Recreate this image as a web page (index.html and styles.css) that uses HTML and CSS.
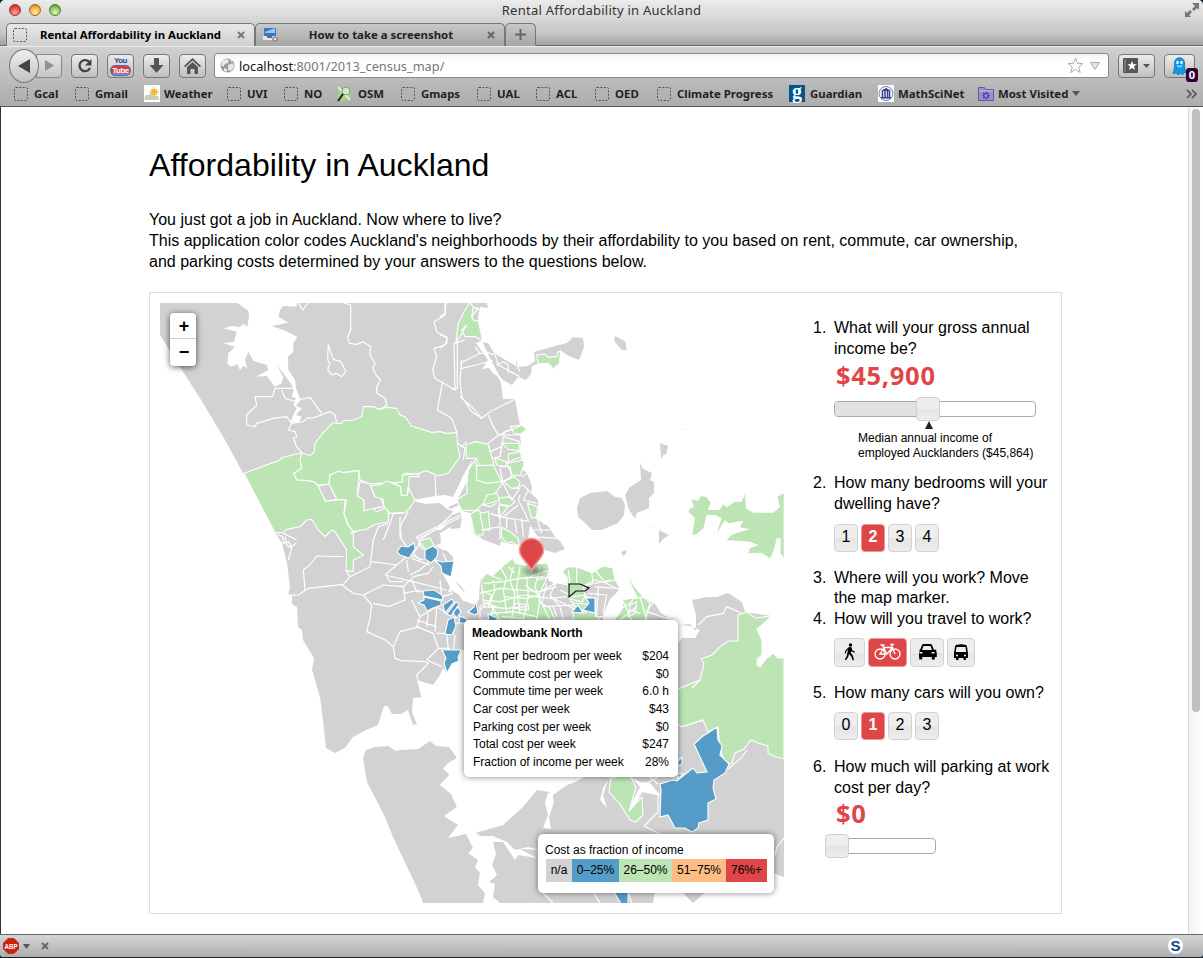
FILE: index.html
```
<!DOCTYPE html>
<html lang="en">
<head>
<meta charset="utf-8">
<title>Rental Affordability in Auckland</title>
<link rel="stylesheet" href="styles.css">
</head>
<body>
<svg width="0" height="0" class="defs">
  <defs>
    <symbol id="blank" viewBox="0 0 14 14"><rect x=".5" y=".5" width="13" height="13" rx="1.5" fill="none" stroke="#555" stroke-dasharray="2 1.4"/></symbol>
    <radialGradient id="shade"><stop offset="0" stop-color="#444" stop-opacity=".6"/><stop offset="1" stop-color="#444" stop-opacity="0"/></radialGradient>
  </defs>
</svg>
<div class="window">
  <header class="titlebar">
    <div class="lights"><i class="light red"></i><i class="light amber"></i><i class="light green"></i></div>
    <span class="title">Rental Affordability in Auckland</span>
    <svg class="full" viewBox="0 0 14 15" width="14" height="15" fill="#777"><path d="M7 0h7v7l-2-2-3 3-2-2 3-3zM0 8l2 2 3-3 2 2-3 3 2 2H0z"/></svg>
  </header>
  <div class="tabs">
    <div class="tab active"><svg class="ic" width="14" height="14"><use href="#blank"/></svg><span class="tabtext">Rental Affordability in Auckland</span><svg width="8" height="8" viewBox="0 0 8 8"><path d="M1 1l6 6M7 1l-6 6" stroke="#777" stroke-width="2"/></svg></div>
    <div class="tab back"><svg width="15" height="15" viewBox="0 0 15 15"><path fill="#3977c8" d="M1 1h12v8H1z"/><path fill="#9fc5ee" d="M2 5l10-4v5H2z"/><path fill="#e8e8e8" d="M0 9h14v4H0z"/><path fill="#667" d="M4 9h5v2H4z"/><circle cx="12" cy="12" r="2.800" fill="#889"/><circle cx="12" cy="12" r="1.200" fill="#eee"/></svg><span class="tabtext">How to take a screenshot</span><svg width="8" height="8" viewBox="0 0 8 8"><path d="M1 1l6 6M7 1l-6 6" stroke="#666" stroke-width="2"/></svg></div>
    <div class="tab new"><svg width="11" height="11" viewBox="0 0 11 11"><path d="M5.500 0v11M0 5.500h11" stroke="#666" stroke-width="2"/></svg></div>
  </div>
  <nav class="navbar">
    <div class="history">
      <div class="backbtn"><svg width="14" height="16" viewBox="0 0 14 16"><path d="M13 1v14L1 8z" fill="#444"/></svg></div>
      <div class="fwd"><svg width="9" height="11" viewBox="0 0 9 11"><path d="M0 0v11l9-5.500z" fill="#909090"/></svg></div>
    </div>
    <div class="btn"><svg width="16" height="16" viewBox="0 0 16 16"><path d="M12.500 4.500A5.500 5.500 0 1 0 13 10" fill="none" stroke="#444" stroke-width="2.300"/><path d="M14.500 1v6.500H8z" fill="#444"/></svg></div>
    <div class="btn yt"><span class="you">You</span><span class="tube">Tube</span></div>
    <div class="btn"><svg width="15" height="17" viewBox="0 0 15 17"><path d="M5 1h5v7h4.500l-7 8-7-8H5z" fill="#555"/></svg></div>
    <div class="btn"><svg width="17" height="16" viewBox="0 0 17 16"><path d="M8.500 0L17 8l-1.200 1.200L8.500 2.500 1.200 9.200 0 8zM3 9l5.500-5L14 9v7h-3.500v-5h-4v5H3z" fill="#555"/></svg></div>
    <div class="url">
      <svg width="15" height="15" viewBox="0 0 15 15"><circle cx="7.500" cy="7.500" r="7" fill="#999"/><path fill="#e8e8e8" d="M2 3l4-2 3 1-1 3-3 1-2 3-2-2zM8 7l5-2 1 4-3 4-3-1zM10 1l3 2-2 1zM4 10l3 1v3l-3-1z"/></svg>
      <span class="address"><b class="host">localhost</b>:8001/2013_census_map/</span>
      <svg class="star" width="17" height="17" viewBox="0 0 17 17"><path d="M8.500 1l2 5.300 5.500.2-4.300 3.500 1.500 5.500-4.700-3.200-4.700 3.200L5.300 10 1 6.500l5.500-.2z" fill="#fff" stroke="#aaa"/></svg>
      <svg width="10" height="8" viewBox="0 0 10 8"><path d="M.5.500h9L5 7.500z" fill="#e4e4e4" stroke="#aaa"/></svg>
    </div>
    <div class="btn bookmarkbtn"><svg width="15" height="15" viewBox="0 0 15 15"><rect width="15" height="15" rx="1" fill="#555"/><path d="M2 1v13" stroke="#999"/><path d="M9 3l1.300 3.200 3.400.1L11 8.400l1 3.600-3-2-3 2 1-3.600-2.700-2.100 3.400-.1z" fill="#fff"/></svg><svg width="7" height="4" viewBox="0 0 7 4"><path d="M0 0h7L3.500 4z" fill="#555"/></svg></div>
    <div class="btn ghost"><svg width="15" height="18" viewBox="0 0 15 18"><path d="M2.500 6C2.500-1 12.500-1 12.500 6c0 5 .5 8 2 10l-2.500-.5-1 2-2.500-1.200L6 18l-1.500-2L1 16.500C2.500 13 2.500 10 2.500 6z" fill="#1597e8" stroke="#1270b5" stroke-width=".8"/><path d="M5.500 4v3M9.500 4v3" stroke="#fff" stroke-width="2"/><path d="M5 8.500q2.500 3 5 0" stroke="#fff" fill="none"/></svg><span class="count">0</span></div>
  </nav>
  <div class="bookmarks">
    <span class="bm"><svg width="14" height="14"><use href="#blank"/></svg>Gcal</span>
    <span class="bm"><svg width="14" height="14"><use href="#blank"/></svg>Gmail</span>
    <span class="bm w"><svg width="16" height="17" viewBox="0 0 16 17"><path fill="#fff" d="M0 0h16v17H0z"/><circle cx="10" cy="7" r="3" fill="#f9b52a"/><path d="M10 2v8M5 7h10M7 4l6 6M13 4l-6 6" stroke="#f9b52a"/><path d="M1 15c-2-4 2-6 4-5 1-3 6-2 6 1 4-1 5 3 3 4z" fill="#c9cdb8"/></svg>Weather</span>
    <span class="bm"><svg width="14" height="14"><use href="#blank"/></svg>UVI</span>
    <span class="bm"><svg width="14" height="14"><use href="#blank"/></svg>NO</span>
    <span class="bm"><svg width="15" height="16" viewBox="0 0 15 16"><path d="M1 1l5 1 4-1 4 2-1 12-4-1-4 1-4-1z" fill="#a5d28c"/><path d="M1 1l12 13M10 10l3-7" stroke="#f2f7df" stroke-width="1.500"/><circle cx="9" cy="5" r="4" fill="#d8eed8" fill-opacity=".8" stroke="#7b9a7b"/><path d="M6 8l-5 7" stroke="#222" stroke-width="2"/></svg>OSM</span>
    <span class="bm"><svg width="14" height="14"><use href="#blank"/></svg>Gmaps</span>
    <span class="bm"><svg width="14" height="14"><use href="#blank"/></svg>UAL</span>
    <span class="bm"><svg width="14" height="14"><use href="#blank"/></svg>ACL</span>
    <span class="bm"><svg width="14" height="14"><use href="#blank"/></svg>OED</span>
    <span class="bm"><svg width="14" height="14"><use href="#blank"/></svg>Climate Progress</span>
    <span class="bm"><i class="guardian">g</i>Guardian</span>
    <span class="bm w"><svg width="16" height="17" viewBox="0 0 16 17"><path fill="#fff" d="M0 0h16v17H0z"/><circle cx="8" cy="8.500" r="7" fill="#eef" stroke="#7781b5"/><path d="M3 6l5-3 5 3zM3 12h10v1.500H3z" fill="#34427e"/><path d="M4.500 6v6M7 6v6M9.500 6v6M11.500 6v6" stroke="#34427e" stroke-width="1.400"/></svg>MathSciNet</span>
    <span class="bm w"><svg width="16" height="15" viewBox="0 0 16 15"><path d="M.5 1.500h6l1.500 2h7.500v11H.5z" fill="#9a8fd0" stroke="#665a9c"/><path d="M1 5h14" stroke="#c5bdec"/><circle cx="8" cy="9.500" r="2.300" fill="none" stroke="#5c4ca0" stroke-width="1.500"/><path d="M8 5.500v2M8 11.500v2M4 9.500h2M10 9.500h2M5.200 6.700l1.300 1.300M9.500 11l1.300 1.300M10.800 6.700L9.500 8M6.500 11l-1.300 1.300" stroke="#5c4ca0" stroke-width="1.200"/></svg>Most Visited<svg class="drop" width="8" height="5" viewBox="0 0 8 5"><path d="M0 0h8L4 5z" fill="#555"/></svg></span>
    <svg width="11" height="10" viewBox="0 0 11 10"><path d="M1 1l4 4-4 4M6 1l4 4-4 4" fill="none" stroke="#555" stroke-width="1.700"/></svg>
  </div>

  <div class="viewport">
    <main class="page">
      <h1 class="heading">Affordability in Auckland</h1>
      <p class="intro">You just got a job in Auckland. Now where to live?<br>This application color codes Auckland's neighborhoods by their affordability to you based on rent, commute, car ownership,<br>and parking costs determined by your answers to the questions below.</p>
      <section class="panel">
        <div class="map">
          <svg class="regions" viewBox="160 303 624 600" width="624" height="600">
            <!-- land masses -->
            <g fill="#d2d2d2">
              <path d="M160 303H487L488 308 480 307 478 318 483 341 474 343 480 342 488 343 494 353 507 361 516 366 516 360 518 367 528 366 535 361 534 352 555 346 567 343 573 337 583 338 584 347 579 360 567 355 560 350 558 362 553 369 547 363 537 364 532 366 531 374 526 380 518 377 512 385 503 380 494 370 501 383 503 399 515 399 517 410 520 425 527 429 520 435 521 443 519 452 523 463 523 470 527 473 532 487 531 493 538 500 538 512 535 518 548 526 556 538 560 541 565 549 555 553 545 550 538 537 530 525 528 540 520 545 505 543 501 541 500 546 481 545 481 537 474 535 469 514 462 511 457 500 468 480 472 460 464 474 453 497 445 495 435 496 413 500 420 503 440 503 447 509 461 514 461 529 450 527 440 533 441 543 435 546 443 550 453 551 453 563 450 577 443 574 450 587 448 592 458 594 467 607 477 602 478 615 490 620V650L462 650 458 660 455 658 447 673 443 668 440 675 433 685 423 682 418 680 422 697 413 698 412 713 417 724 413 725 408 710 401 714 392 714 388 706 384 706 378 725 366 730 353 737 345 748 335 753 326 748 323 720 320 697 312 670 314 658 303 640 302 630 298 627 297 607 292 604 292 595H288L290 587 287 563 282 543 275 533 262 507 243 473 225 440 203 403 180 367 160 335z"/>
              <path d="M615 336L625 341 627 350H622L614 341zM660 443L668 446 666 455 664 454 661 459zM640 463L643 469 652 473 650 480 654 482V493L649 498 649 508 637 513 635 519 629 510 625 495 630 487 641 480zM577 508L580 498 590 493 607 491 615 497 622 498 625 505 624 515 618 523 602 530 592 530 583 521 578 517zM659 530L669 535 662 540 659 544zM621 552L627 550 626 554 623 556zM682 429h1v1h-1zM653 527h1v1h-1z"/>
              <path d="M480 580L487 573 492 576 504 565 513 558 515 563 523 565 547 563 550 570 548 580 559 587 567 583 567 577 562 572 567 567 577 567 592 573 603 566 613 568 615 580 620 590 612 597 603 613V627H478L475 612 478 600z"/>
              <path d="M629 568L632 583 643 597 655 604 661 613 667 617 670 630H613L614 620 622 609 623 600 637 597 630 583z"/>
              <path d="M692 600L707 597 717 597 728 593 742 602 745 612 772 616 758 628 757 637 762 655 758 660 757 665 760 667 765 660 773 653 778 658 784 658V877L773 873 762 864H745L708 890 693 903 680 890 655 890 653 903H423L418 890 393 837 385 817 367 782 363 758 366 750 375 747 388 746 396 751 400 750 418 749 430 741 436 746 449 747 457 758 455 766 443 768 450 775 440 785 452 793 457 807 445 817 458 824 475 833 503 825 523 807 537 790 550 792 551 804 553 795 567 785 573 783 583 778 600 740 660 700 678 643 682 638 695 638 700 630 690 626 680 625 690 624 696 631V615z"/>
            </g>
            <!-- harbours and estuaries -->
            <g fill="#fff">
              <path transform="translate(160 300) scale(.33333)" d="M230 8L265 32 267 52 262 80 250 72 240 82 215 78 190 85 230 95 222 125 190 130 225 140 205 160 202 192 215 200 232 193 240 210 250 198 262 205 255 180 265 155 280 182 320 195 325 210 288 230 320 228 345 260 365 250 370 232 350 195 370 220 392 250 402 268 395 290 408 295 400 315 410 325 400 345 392 365 415 370 425 350 408 345 425 325 408 318 422 300 416 285 408 265 405 240 385 210 384 170 400 155 400 130 412 110 370 90 335 78 385 68 355 50 360 30 370 18 410 20 410 8z"/>
              <path d="M457 758L448 763 443 769 450 774 440 785 451 794 457 807 444 816 458 825 448 838 466 834 473 848 468 853 478 860 475 867 480 873 478 885 485 893 483 903H500L493 897 495 884 489 882 497 875 492 865 496 854 493 842 503 842 515 860 518 855 537 858 520 849 540 850 528 847 515 850 507 842 493 836 480 836 475 832 503 825 515 780zM548 793L545 803 548 815 543 828 551 829 549 817 554 802 552 792zM608 780L603 788 600 800 607 808 603 795zM631 777L640 787 634 798 628 811 637 803 642 792 661 796 650 783 640 782z"/>
              <path d="M476 343L482 341 489 356 500 377 494 374 489 368 482 369 488 360zM413 500L434 498 455 500 464 506 456 509 470 513 474 536 500 546 520 545 530 553 494 567 480 578 479 600 471 600 463 587 453 583 454 558 441 545 441 535 452 528 452 520 441 530 435 530 454 511 440 503 425 504z"/>
            </g>
            <g fill="#d2d2d2"><path d="M448 507l9-4 4 1-10 5zM440 527l12-12 8-3 2 6-2 10-8 1-5-5zM454 581l12 13-4-7zM451 590l8 5 6 10-4 4-8-8zM461 600l12 4-4 9-6-3z"/></g>

            <!-- regions costing 26 to 50 percent of income -->
            <g class="edge" fill="#bce4b5" transform="translate(160 300) scale(.33333)">
              <path d="M425 458L450 467 463 455 465 430 490 397 520 367 530 370 545 370 550 362 580 360 605 350 610 320 642 320 655 328 680 322 710 325 720 345 735 350 755 378 815 397 840 395 860 400 890 398 893 435 900 470 865 520 835 527 798 512 770 522 735 520 725 548 660 550 630 552 600 540 597 512 550 518 535 514 510 525 507 552 475 556 462 545 440 542 410 540 402 520 425 505 420 480z"/>
              <path d="M252 520L360 480 365 473 425 458 420 480 425 505 402 520 410 540 440 542 462 545 475 558 497 603 555 598 552 640 562 672 580 695 580 740 610 765 580 780 580 815 558 812 560 750 525 695 515 690 495 710 475 690 455 658 440 660 420 680 380 688 370 697 345 698 308 628z"/>
              <path d="M510 525L535 514 550 518 597 512 592 585 612 600 612 632 640 625 650 635 675 625 685 630 685 665 640 675 620 688 580 695 565 675 552 640 560 600 530 598 507 552z"/>
              <path d="M475 558L507 552 530 598 497 604z" fill="#d2d2d2"/><path d="M600 545L630 552 645 590 660 592 673 620 640 625 612 632 612 600 592 588z" fill="#d2d2d2"/>
              <path d="M632 558L665 553 680 543 722 560 724 587 742 585 746 565 765 600 748 625 735 638 690 640 672 620 670 598 645 590z"/><path d="M727 525L775 521 778 530 748 530 742 585 724 587 722 560 700 548 727 546z"/>
              <path d="M888 123L895 70 915 30 930 8 940 22 955 25 935 50 940 60 955 63 968 123 945 110 915 110 905 90 920 75 900 110z"/>
              <path d="M1130 165L1155 162 1165 172 1190 170 1195 155 1202 155 1198 190 1180 207 1165 190 1135 192z"/>
            </g>
            <g class="edge" fill="#bce4b5" transform="translate(440 300) scale(.33333)">
              <path d="M77 435L105 425 145 433 162 495 120 505 110 475 80 475z"/><path d="M80 555L85 510 105 480 115 535 175 540 188 548 170 575 130 610 105 632 65 630 50 600 82 580z"/><path d="M110 497L160 495 185 545 140 550 110 540z"/><path d="M90 642L118 630 132 665 128 705 105 705z"/><path d="M120 640L145 635 150 690 130 690z"/><path d="M140 585L170 580 180 600 130 615z"/><path d="M175 595L210 590 225 605 210 618 180 612z"/><path d="M177 615L205 620 180 650z"/><path d="M190 545L222 530 240 545 235 565 215 565z"/><path d="M185 430L240 430 235 452 205 448z"/><path d="M205 462L240 455 245 470 205 485z"/><path d="M200 490L250 480 252 495 240 527 217 525z"/><path d="M165 475L200 485 195 500 170 495z"/><path d="M210 380L245 375 260 388 240 403 222 400z"/><path d="M262 610L292 620 290 650 275 655z"/><path d="M185 682L210 695 235 715 238 740 215 725 200 730 184 710z"/>
            </g>
            <path fill="#bce4b5" transform="translate(440 480) scale(.33333)" d="M745 95L752 85 762 80 753 58 775 62 782 48 800 52 812 68 803 90 838 90 850 73 860 82 885 65 905 65 915 42 918 85 940 98 1000 98 1020 80 1012 50 1031 40V232L1022 220 1022 175 1010 175 1002 210 990 235 965 218 925 220 930 205 955 195 930 185 860 180 875 165 900 155 930 148 900 142 910 122 865 130 855 120 830 160 840 130 845 115 825 105 800 105 790 145 770 162 757 165 765 115z"/>
            <path class="edge" fill="#bce4b5" d="M481 580L487 573 492 576 504 565 513 558 515 563 523 565 547 563 550 570 545 582 538 597 565 602 594 605 603 614 596 622H480L484 604z"/>
            <path class="edge" fill="#bce4b5" d="M562 572L567 567 577 567 592 573 603 566 613 568 615 580 600 583 590 588 582 602 568 598 567 577z"/>
            <path class="edge" fill="#bce4b5" d="M629 568L632 583 643 597 650 602 645 622H613L622 609 623 600 637 597 630 583zM419 541L430 538 434 546 426 550z"/>
            <path class="edge" fill="#d2d2d2" transform="translate(440 480) scale(.33333)" d="M300 335L350 308 385 315 387 355 400 370 400 420 345 420 330 385 298 365zM430 318L465 300 490 305 540 330 510 360 490 410 467 410 467 355 435 350zM570 375L590 365 585 400 565 410zM120 380L140 365 160 380 150 420H120zM225 370L265 375 265 390 220 385z"/>
            <path class="edge" fill="#bce4b5" d="M738 615L747 612 755 618 772 616 761 626 757 629 762 640 762 655 757 659 757 665 760 667 765 660 773 653 778 658 784 658V759L773 756 768 753V746L758 743 751 740 744 749 735 753 732 763 725 764 720 748 718 727 708 732 703 720 682 727 670 720 678 689 700 680 704 664 701 659 712 655 722 645 729 641 738 641z"/>
            <path class="edge" fill="#bce4b5" d="M611 778L629 774 636 787 629 811 642 797 643 815 636 822 630 820 620 804 609 792z"/>

            <!-- internal boundaries -->
            <g class="lines" transform="translate(160 300) scale(.33333)">
              <path d="M415 8L428 30 445 8M550 8L572 15 572 90 563 110 568 130 590 133 610 125 632 140 630 165 645 190 638 205 648 225 662 240 650 260 650 280 675 295 680 315 660 330M505 135L503 180 510 190 503 210 515 225 530 220 545 230 558 215 543 185 520 178zM858 8L855 45 822 65 830 95 862 115 855 135 822 145 830 170 818 210 825 235 885 270 882 130 915 120M892 115L892 265 875 268M848 245L832 330 875 355 892 400M405 265H345L338 290 285 290 290 315 260 345 260 375 285 380 290 370 340 355 380 350 395 370 430 365 440 355 465 352 510 335 525 345 530 368M365 270L375 295 400 303 450 292 485 340M395 370L385 390 405 395 410 410 400 415 410 440 425 458M905 180L900 240 905 290 935 335 965 355M905 205L950 195 1000 180M825 527L828 590M895 430L905 440 920 425M745 635L720 680 725 720M925 640L835 685 775 715M370 700L410 720M730 640L700 640 690 670 670 720M590 695L570 700"/>
            </g>
            <g class="lines" transform="translate(220 440) scale(.33333)">
              <path d="M170 282L188 290 190 310 205 305 215 320 228 310M195 290L200 315 215 325 205 360M255 450L250 390 270 375 290 348 370 350M380 395L390 410 370 433 265 445 235 465 205 465M390 410L450 380 460 300 475 260 505 250M455 365L530 375 560 350M365 435L400 460 430 465 455 495 450 535 440 575 495 600 520 620 525 655 545 662 615 665 625 670 590 705 605 770M430 465L490 435 550 440 555 480 505 500 460 490M520 620L540 575 600 560M600 360L580 340 600 310 590 290 720 225M540 230L540 290 560 320M495 405L600 430 680 450M495 405L530 375M570 405L600 390 650 345M550 440L580 410 625 400 640 380M575 480L600 530 590 560 640 580 655 625 620 660M600 530L650 500 680 520M625 520L620 560M650 500L645 575M600 300L650 265M655 625L690 625M650 580L700 580 690 560 735 540M680 580L685 630M620 660L665 680M705 585L700 630M590 540L650 560M575 420L590 455 620 455M550 460L600 450M660 420L665 470 700 460M500 410L510 425 550 425M570 345L610 360M575 355L630 375M560 360L565 395M595 310L610 330M670 340L680 365"/>
            </g>
            <g class="lines" transform="translate(440 300) scale(.33333)">
              <path d="M60 190L100 170 120 160 105 140M120 160L145 160M135 155L165 165 175 195 240 230M170 195L190 185 205 195 205 220M230 195L240 215M100 20L95 55M105 25L118 30M60 290L95 320 125 355 150 335 190 315 225 298M145 345L160 380 175 405 145 430M175 405L240 378M175 405L245 405M190 405L195 395 225 385M190 410L240 425M190 410L180 470 160 475M145 433L150 455 185 440M180 500L210 500 215 530 188 545 180 505M245 530L270 515M240 565L215 600 188 548M220 565L250 555 275 580M240 585L235 600 265 660M265 570L250 600 290 610M175 620L175 650 240 660 270 665M150 640L180 650 180 720M130 615L150 620 170 610M125 690L180 680M190 650L235 615M200 650L200 685M225 660L230 700M245 655L250 710M280 690L330 690M290 650L305 700M270 710L350 715M310 675L320 665M60 435L75 445 70 480M0 50L15 40 15 8M0 105L20 110 20 130 0 145"/>
            </g>
            <g class="lines" transform="translate(440 480) scale(.33333)">
              <path d="M120 340L180 325 240 330 300 335 350 320M125 360L180 365 250 345 330 355 380 350M130 310L190 305 240 295 310 290M150 400L220 395 290 410M190 350L260 355 300 345M130 380L200 385 260 380M160 300L165 330 150 370 180 420M200 290L190 330 200 400M220 260L210 300 225 345 215 420M240 260L230 320 240 400M260 290L265 350 250 420M300 260L285 320 300 360 290 420M320 310L305 370 330 420M350 305L330 345 360 380 370 420M150 285L185 300M180 260L200 295M205 260L225 280M270 290L330 270M290 300L330 290M330 350L390 380 420 400M310 380L400 375 440 400M360 330L400 350 440 345M410 260L410 310M385 270L390 310M455 280L460 310 430 320M490 300L465 270M465 310L510 300M465 320L525 325M445 340L500 345M475 320L470 410M500 345L490 400M120 390L140 370 170 380M185 410L250 415M130 335L155 345 145 380M255 315L290 340M340 380L350 410M520 400L570 370 590 345M550 365L575 420M590 380L540 420M600 350L620 420M640 365L620 395 680 415M570 390L600 400M580 355L640 350M775 435L800 410 850 400 860 380 895 395 905 400"/>
            </g>
            <g class="lines">
              <path d="M692 688L700 680M640 787L658 777M644 826L658 812 658 795M644 826L662 835M728 769L741 758 747 750M784 838L777 847 775 855M543 893L553 903M592 890L600 903M627 890L632 903M680 727L690 724 703 720M650 777L658 784"/>
            </g>

            <!-- regions costing up to 25 percent of income -->
            <g class="edge" fill="#569cc9">
              <path d="M397 552L401 546 408 547 414 543 415 549 409 558 400 555zM425 550L433 546 438 550 437 557 431 563 425 559zM434 560L442 562 454 561 451 577 442 573 441 566zM423 591L434 590 442 595 443 600 424 596zM424 597L441 601 441 605 433 608 427 611 424 605 418 603 424 600zM443 605L452 599 454 602 445 613zM447 614L456 602 459 604 451 616zM453 612L458 607 461 612 456 618zM460 616L467 619V623H459zM445 634L448 620 454 617 456 626 452 635zM468 612L474 607 476 602 478 613 475 615zM442 650L461 650 458 657 459 661 452 664 447 673 444 663 446 658zM572 612L578 605 583 613zM586 598L595 598 595 613 583 610 589 603zM488 614L497 618 497 624H489z"/>
              <path d="M694 744L703 736 708 733 717 727 718 740 722 746 720 755 729 764 725 773 714 780 713 788 716 799 708 803 708 820 699 823 698 828 692 832 685 828 675 828 668 815 660 817 661 790 660 784 673 780 677 781 683 776 693 768 697 773 707 772z"/><path d="M678 761L682 757V764L678 766zM678 774L683 774 678 779z"/><path d="M613 890H628V904H621z"/>
            </g>
            <path d="M569 584h11l9 4-4 3-9 0-7 6z" fill="none" stroke="#111" stroke-width="1.200"/>
            <ellipse cx="534" cy="571" rx="14" ry="7" fill="url(#shade)"/>
            <path d="M531.500 571C528 562 519.500 558 519.500 550.500a12 12 0 0 1 24 0C543.500 558 535 562 531.500 571z" fill="#df4648" stroke="#eb9aa0" stroke-width="1.600"/>
          </svg>
          <div class="zoom"><span class="zin">+</span><span class="zout">−</span></div>
          <div class="popup">
            <strong class="place">Meadowbank North</strong>
            <div class="row"><span>Rent per bedroom per week</span><span>$204</span></div>
            <div class="row"><span>Commute cost per week</span><span>$0</span></div>
            <div class="row"><span>Commute time per week</span><span>6.0 h</span></div>
            <div class="row"><span>Car cost per week</span><span>$43</span></div>
            <div class="row"><span>Parking cost per week</span><span>$0</span></div>
            <div class="row"><span>Total cost per week</span><span>$247</span></div>
            <div class="row"><span>Fraction of income per week</span><span>28%</span></div>
          </div>
          <div class="legend">
            <div>Cost as fraction of income</div>
            <div class="scale"><span class="na">n/a</span><span class="c1">0–25%</span><span class="c2">26–50%</span><span class="c3">51–75%</span><span class="c4">76%+</span></div>
          </div>
        </div>
        <div class="questions">
          <div class="q q1"><span class="num">1.</span><div>What will your gross annual<br>income be?
            <div class="value">$45,900</div>
            <div class="slider income"><div class="fill"></div><div class="handle"></div></div>
            <svg class="tri" width="8" height="8" viewBox="0 0 8 8"><path d="M4 0l4 8H0z" fill="#222"/></svg>
            <div class="median">Median annual income of<br>employed Aucklanders ($45,864)</div></div></div>
          <div class="q q2"><span class="num">2.</span><div>How many bedrooms will your<br>dwelling have?
            <div class="choices"><span class="ch">1</span><span class="ch on">2</span><span class="ch">3</span><span class="ch">4</span></div></div></div>
          <div class="q q3"><span class="num">3.</span><div>Where will you work? Move<br>the map marker.</div></div>
          <div class="q q4"><span class="num">4.</span><div>How will you travel to work?
            <div class="choices travel">
              <span class="ch walk"><svg width="12" height="18" viewBox="0 0 12 18"><circle cx="6.500" cy="2" r="1.700"/><path d="M5 4l2.500.3.800 3 2.700 1.500-.6 1L7.200 8.200 7 10l2 3 1 4-1.400.4-1.300-3.800L5 11l-.8 3L2 17.300l-1.200-.8L2.800 13 4 6.500 2.500 8l-.7 2.500-1.100-.3.800-3z"/></svg></span>
              <span class="ch bike on"><svg width="27" height="17" viewBox="0 0 27 17" fill="none" stroke="#fff" stroke-width="1.300"><circle cx="6" cy="11" r="5"/><circle cx="21" cy="11" r="5"/><path d="M6 11l4-6.500h8.500L13 11zM13 11L8.500 2.500M6.500 2h4M21 11L17 1.500h3"/></svg></span>
              <span class="ch car"><svg width="20" height="16" viewBox="0 0 20 16"><path d="M3 6l2-5q.5-1 1.500-1h7q1 0 1.500 1l2 5 2-.5q1 .8 0 1.500.8.800.8 2V13h-2v2.500h-3V13H5.200v2.500h-3V13H2V9q0-1.200.8-2-1-.7 0-1.500zM5 6h10l-1.500-4h-7z" fill-rule="evenodd"/><path d="M2.500 8.800h3M14.500 8.800h3" stroke="#eee" stroke-width="1.500"/></svg></span>
              <span class="ch bus"><svg width="14" height="16" viewBox="0 0 14 16"><path d="M2 1q5-1.500 10 0 1 .5 1.200 3l.8 5v5h-2v2h-2.500v-2h-5v2H2v-2H0V9l.8-5Q1 1.500 2 1zM2.500 3L1.800 8h10.400l-.7-5z" fill-rule="evenodd"/><path d="M2 11.500h2M10 11.500h2" stroke="#eee" stroke-width="1.500"/></svg></span>
            </div></div></div>
          <div class="q q5"><span class="num">5.</span><div>How many cars will you own?
            <div class="choices cars"><span class="ch">0</span><span class="ch on">1</span><span class="ch">2</span><span class="ch">3</span></div></div></div>
          <div class="q q6"><span class="num">6.</span><div>How much will parking at work<br>cost per day?
            <div class="value">$0</div>
            <div class="slider parking"><div class="handle"></div></div></div></div>
        </div>
      </section>
    </main>
    <div class="scrollbar"><div class="thumb"></div></div>
  </div>
  <footer class="status">
    <svg width="16" height="16" viewBox="0 0 16 16"><path d="M5 .5h6L15.500 5v6L11 15.500H5L.5 11V5z" fill="#d3200c" stroke="#a33"/><text x="8" y="10.500" text-anchor="middle" textLength="13" lengthAdjust="spacingAndGlyphs" class="abp">ABP</text></svg>
    <svg width="7" height="5" viewBox="0 0 7 5"><path d="M0 0h7L3.500 5z" fill="#555"/></svg>
    <svg class="closebar" width="8" height="8" viewBox="0 0 8 8"><path d="M1 1l6 6M7 1l-6 6" stroke="#666" stroke-width="1.800"/></svg>
    <span class="sbadge">S</span>
  </footer>
</div>
</body>
</html>
```
FILE: styles.css
```
* { box-sizing: border-box; }
body { margin: 0; background: #14202c; font-family: "Liberation Sans", Helvetica, sans-serif; color: #000; }
.defs { position: absolute; }
svg { display: block; flex: none; }
.window { width: 1203px; height: 958px; display: flex; flex-direction: column; overflow: hidden; border-radius: 5px 5px 4px 4px; background: #b4b4b4; border-bottom: 1px solid #14202c; }

.titlebar { height: 22px; display: grid; grid-template-columns: 100px 1fr 100px; align-items: center; background: linear-gradient(#ececec, #d3d3d3); font: 13px/20px "Noto Sans", sans-serif; color: #333; }
.lights { display: flex; gap: 8px; padding-left: 9px; margin-top: -1px; }
.light { width: 12px; height: 12px; border-radius: 50%; border: 1px solid #555; }
.red { background: radial-gradient(circle at 50% 75%, #ffaaa2, #e8423e 60%, #a3201c); border-color: #963a36; }
.amber { background: radial-gradient(circle at 50% 75%, #fff0a0, #f5ae3c 60%, #b5701c); border-color: #9a6a2c; }
.green { background: radial-gradient(circle at 50% 75%, #dcffb4, #7fc256 60%, #3f7a28); border-color: #4f7a3e; }
.title { text-align: center; letter-spacing: .25px; margin-top: -2px; }
.full { justify-self: end; margin-right: 4px; }

.tabs { height: 24px; display: flex; padding-left: 6px; background: linear-gradient(#d2d2d2, #c6c6c6 50%, #a2a2a2); border-bottom: 1px solid #666; color: #222; }
.tab { height: 23px; display: flex; align-items: center; border: 1px solid #777; border-bottom: 0; border-radius: 5px 5px 0 0; margin-top: 1px; background: linear-gradient(#c8c8c8, #a6a6a6); }
.tabtext { flex: 1; text-align: center; white-space: nowrap; font: bold 11.400px/22px "Noto Sans", sans-serif; }
.active { width: 249px; height: 24px; padding: 0 9px 0 6px; background: linear-gradient(#e8e8e8, #cfcfcf); color: #000; }
.active .tabtext { padding-right: 3px; }
.back { width: 250px; padding: 0 9px 0 7px; }
.back .tabtext { padding-right: 3px; }
.new { width: 31px; justify-content: center; }

.navbar { height: 38px; display: flex; align-items: center; padding: 1px 8px 0 9px; gap: 9px; border-top: 1px solid #eee; background: linear-gradient(#d0d0d0, #bababa); }
.history { display: flex; align-items: center; width: 53px; }
.backbtn { width: 30px; height: 34px; border: 1px solid #777; border-radius: 50%; background: linear-gradient(#f0f0f0, #c0c0c0); display: flex; align-items: center; justify-content: center; z-index: 1; }
.fwd { width: 26px; height: 24px; margin-left: -3px; display: flex; align-items: center; justify-content: center; border: 1px solid #888; border-radius: 0 4px 4px 0; background: linear-gradient(#e6e6e6, #c6c6c6); }
.btn { width: 27px; height: 24px; display: flex; align-items: center; justify-content: center; border: 1px solid #777; border-radius: 4px; background: linear-gradient(#ececec, #bfbfbf); flex: none; position: relative; }
.yt { flex-direction: column; font: bold 8px/9px "Liberation Sans", sans-serif; letter-spacing: -.5px; }
.you { color: #225088; }
.tube { color: #fff; background: linear-gradient(#d43c46 60%, #7c9cd0); border: 1px solid #4672b4; border-radius: 5px; padding: 0 1px; }
.url { flex: 1; height: 25px; margin-left: -1px; display: flex; align-items: center; gap: 4px; padding: 0 8px 0 5px; background: linear-gradient(#f4f4f4, #fff 8px); border: 1px solid #8a8a8a; border-radius: 3px; font: 12.800px/22px "Noto Sans", sans-serif; color: #777; }
.address { flex: 1; }
.host { font-weight: normal; color: #111; }
.star { margin-right: 2px; }
.bookmarkbtn { width: 37px; gap: 5px; }
.ghost { width: 31px; }
.count { position: absolute; right: -4px; bottom: -5px; width: 12px; height: 14px; border-radius: 3px; background: #300038; color: #fff; font: bold 11px/14px "Noto Sans", sans-serif; text-align: center; }

.bookmarks { height: 23px; display: grid; grid-template-columns: 61px 69px 83px 57px 53px 64px 76px 59px 59px 62px 132px 89px 100px 208px 12px; align-items: center; padding: 0 0 2px 14px; background: linear-gradient(#b8b8b8, #adadad); border-bottom: 1px solid #555; font: bold 11.400px/18px "Noto Sans", sans-serif; color: #222; }
.bm { display: flex; align-items: center; gap: 6px; white-space: nowrap; }
.w { gap: 4px; }
.guardian { width: 16px; height: 17px; margin-right: -1px; background: #00578b; color: #fff; font: bold 20px/12px "Liberation Serif", serif; text-align: center; }

.viewport { height: 828px; display: flex; background: #fff; border-left: 1px solid #333; }
.page { flex: 1; padding-left: 148px; }
.scrollbar { width: 15px; padding: 2px 3px; border-left: 1px solid #ddd; background: linear-gradient(90deg, #f2f2f2, #fff); }
.thumb { width: 8px; height: 603px; border-radius: 4px; background: #c0c0c0; }
.heading { margin: 39px 0 0; font-size: 32px; line-height: 38px; font-weight: normal; white-space: nowrap; letter-spacing: .05px; }
.intro { margin: 25px 0 0; font-size: 16px; line-height: 21px; white-space: nowrap; }
.panel { display: flex; width: 913px; height: 622px; margin-top: 20px; padding: 10px; border: 1px solid #ddd; }
.map { width: 624px; height: 600px; position: relative; }
.edge { stroke: #fff; stroke-width: 1.1; vector-effect: non-scaling-stroke; }
.edge path, .lines path { vector-effect: non-scaling-stroke; }
.lines { fill: none; stroke: #fff; stroke-width: 1.2; stroke-linejoin: round; }

.zoom { position: absolute; left: 10px; top: 10px; width: 26px; height: 53px; border-radius: 4px; background: #fff; box-shadow: 0 1px 6px rgba(0,0,0,.65); font: bold 18px/26px "Liberation Sans", sans-serif; text-align: center; }
.zoom span { display: block; height: 26px; padding-left: 2px; }
.zin { height: 27px; border-bottom: 1px solid #ccc; }
.popup { position: absolute; left: 304px; top: 317px; width: 214px; height: 157px; padding: 5px 9px 0 9px; background: #fff; border-radius: 5px; box-shadow: 0 0 6px rgba(0,0,0,.5); font-size: 12px; line-height: 17.650px; }
.place { display: block; line-height: 16px; margin: 0 0 7px -1px; font-size: 12px; }
.row { display: flex; justify-content: space-between; }
.legend { position: absolute; left: 378px; top: 531px; width: 236px; height: 59px; padding: 7px 7px; background: #fff; border-radius: 5px; box-shadow: 0 0 6px rgba(0,0,0,.5); font-size: 12px; line-height: 18px; }
.scale { display: flex; margin-left: 1px; line-height: 23px; text-align: center; }
.na { width: 26px; background: #d2d2d2; }
.c1 { width: 47px; background: #569cc9; }
.c2 { width: 53px; background: #bce4b5; }
.c3 { width: 54px; background: #fdbe85; }
.c4 { width: 41px; background: #df4648; }

.questions { padding: 15.500px 0 0 29px; font-size: 16px; line-height: 20.800px; white-space: nowrap; display: flex; flex-direction: column; }
.q { display: flex; }
.num { width: 21px; flex: none; }
.value { height: 30px; padding-left: 2px; font: bold 25.500px/30px "Noto Sans", sans-serif; color: #df4648; letter-spacing: .7px; }
.slider { height: 16px; border: 1px solid #aaa; border-radius: 4px; background: #fff; position: relative; }
.income { width: 202px; margin-top: 11px; }
.fill { width: 93px; height: 14px; background: #e1e1e1; border-radius: 3px 0 0 3px; }
.handle { position: absolute; top: -5px; width: 24px; height: 24px; border: 1px solid #d0d0d0; border-radius: 4px; background: linear-gradient(#eee 50%, #e4e4e4 50%, #ededed); }
.income .handle { left: 81px; }
.parking { width: 102px; margin-top: 10px; }
.parking .handle { left: -10px; }
.tri { margin: 4px 0 0 91px; }
.median { padding: 2px 0 0 24px; font-size: 12px; line-height: 15px; }
.q2 { margin-top: 12px; }
.q3 { margin-top: 16px; }
.q5 { margin-top: 16px; }
.q6 { margin-top: 17px; }
.choices { display: flex; gap: 3px; margin-top: 9px; }
.travel { margin-top: 8px; }
.cars { margin-top: 8px; }
.ch { width: 24px; height: 28px; display: flex; align-items: center; justify-content: center; padding-bottom: 1px; border: 1px solid #d3d3d3; border-radius: 4px; background: linear-gradient(#eee 50%, #e4e4e4 50%, #ededed); line-height: 24px; }
.travel .ch { height: 29px; padding-bottom: 2px; }
.ch.on { background: #df4648; border-color: #e9999a; color: #fff; font-weight: bold; }
.walk { width: 31px; }
.ch.bike { width: 39px; }
.ch.car { width: 34px; }
.ch.bus { width: 28px; }

.status { height: 23px; display: flex; align-items: center; padding: 0 20px 0 3px; gap: 4px; border-top: 1px solid #666; background: linear-gradient(#d6d6d6, #adadad); }
.abp { font: bold 7.500px "Liberation Sans", sans-serif; fill: #fff; }
.closebar { margin-left: 7px; }
.sbadge { margin-left: auto; width: 15px; height: 16px; border-radius: 8px; background: #fff; color: #16418a; font: bold 15px/16px "Liberation Sans", sans-serif; text-align: center; }
```
